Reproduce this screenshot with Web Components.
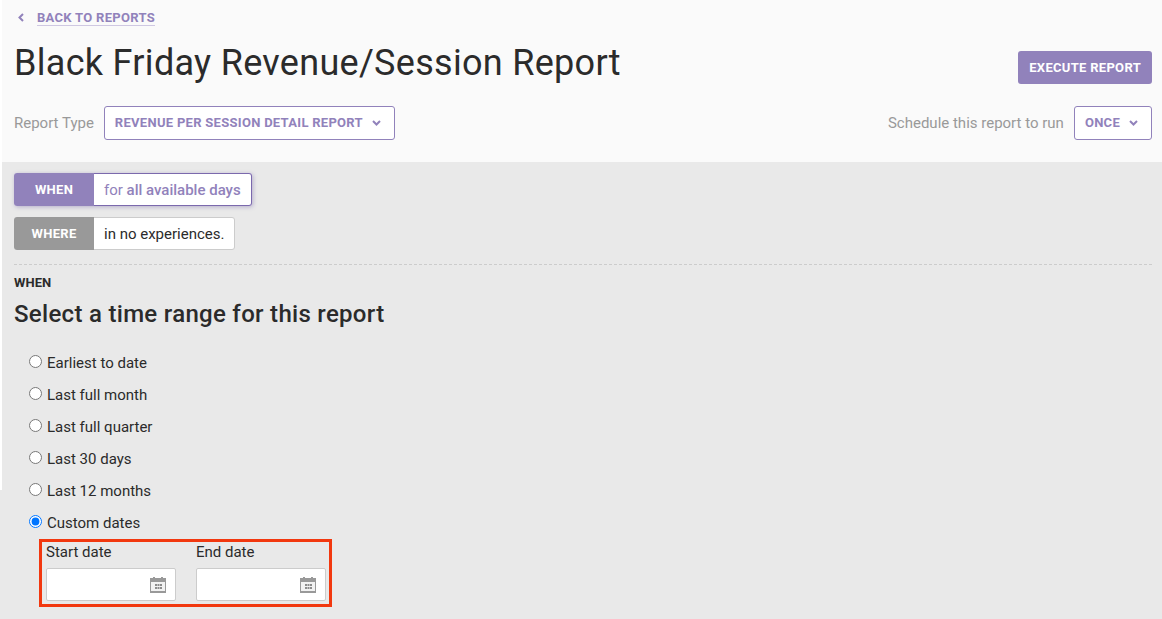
<!DOCTYPE html>
<html>
<head>
<meta charset="utf-8">
<style>
  html, body { margin: 0; height: 100%; background: #fff; overflow: hidden; }
  body { font-family: Roboto, sans-serif; color: #2b2b2b; }
</style>
</head>
<body>
<template id="chev">
  <svg width="9" height="6" viewBox="0 0 9 6" style="display:block"><path d="M1 1l3.5 3.5L8 1" fill="none" stroke="#9182bb" stroke-width="2"/></svg>
</template>

<report-page>
  <report-header slot="header"></report-header>
  <filter-tab label="WHEN" active>for <b>all available days</b></filter-tab>
  <filter-tab label="WHERE">in no experiences.</filter-tab>
  <time-range></time-range>
</report-page>

<script>
class ReportPage extends HTMLElement {
  constructor() {
    super();
    this.attachShadow({ mode: 'open' }).innerHTML = `
      <style>
        :host { display: block; height: 619px; background: linear-gradient(90deg, #fff 2px, transparent 2px) 0 0 / 100% 490px no-repeat, #e9e9e9; }
        .head { height: 162px; margin-left: 2px; background: #fafafa; }
        .body { margin-left: 2px; height: 457px; padding: 11px 10px 0 12px; box-sizing: border-box; display: flex; flex-direction: column; align-items: flex-start; gap: 11px; }
      </style>
      <div class="head"><slot name="header"></slot></div>
      <div class="body"><slot></slot></div>`;
  }
}

class SelectButton extends HTMLElement {
  constructor() {
    super();
    this.attachShadow({ mode: 'open' }).innerHTML = `
      <style>
        :host { display: inline-flex; align-items: center; gap: 9px; height: 34px; box-sizing: border-box; padding: 0 13px 2px 10px; background: #fff; border: 1px solid #9182bb; border-radius: 3px; color: #9182bb; font: 700 13px/1 Roboto, sans-serif; letter-spacing: .29px; }
        svg { position: relative; top: 1px; }
      </style>
      <slot></slot>`;
    this.shadowRoot.append(document.getElementById('chev').content.cloneNode(true));
  }
}

class ReportHeader extends HTMLElement {
  constructor() {
    super();
    this.attachShadow({ mode: 'open' }).innerHTML = `
      <style>
        :host { display: block; padding: 0 10px 0 12px; }
        .back { display: flex; align-items: center; height: 35px; gap: 13px; padding-left: 4px; color: #9182bb; font-size: 13px; font-weight: 700; letter-spacing: .3px; }
        .back span { border-bottom: 1px solid #cfc8e2; line-height: 14px; margin-top: 1px; }
        .title { display: flex; justify-content: space-between; align-items: flex-start; height: 71px; }
        h1 { margin: 0; font-size: 36px; font-weight: 400; line-height: 56px; letter-spacing: .3px; color: #2b2b2b; }
        .exec { margin-top: 16px; height: 33px; padding: 0 11px; background: #9182bb; color: #fff; border: 0; border-radius: 3px; font: 700 13px Roboto, sans-serif; letter-spacing: .3px; }
        .row { display: flex; justify-content: space-between; align-items: center; }
        .group { display: flex; align-items: center; gap: 10px; color: #999; font-size: 15px; }
      </style>
      <div class="back">
        <svg width="6" height="9" viewBox="0 0 6 9"><path d="M5 1L1.5 4.5 5 8" fill="none" stroke="#9182bb" stroke-width="2"/></svg>
        <span>BACK TO REPORTS</span>
      </div>
      <div class="title">
        <h1>Black Friday Revenue/Session Report</h1>
        <button class="exec">EXECUTE REPORT</button>
      </div>
      <div class="row">
        <div class="group">Report Type <select-button>REVENUE PER SESSION DETAIL REPORT</select-button></div>
        <div class="group">Schedule this report to run <select-button>ONCE</select-button></div>
      </div>`;
  }
}

class FilterTab extends HTMLElement {
  constructor() {
    super();
    const active = this.hasAttribute('active');
    this.attachShadow({ mode: 'open' }).innerHTML = `
      <style>
        :host { display: inline-flex; height: 33px; box-sizing: border-box; border-radius: 3px; font-size: 15px; background: #fff; }
        :host([active]) { box-shadow: 1px 1px 4px rgba(86,66,150,.35); }
        ::slotted(b) { font-weight: 500; }
        .label { width: 80px; display: flex; align-items: center; justify-content: center; color: #fff; font-size: 13px; font-weight: 700; letter-spacing: .3px; border-radius: 3px 0 0 3px; background: ${active ? '#9182bb' : '#999'}; }
        .text { display: flex; align-items: center; white-space: pre; padding: 0 10px; border: 1px solid ${active ? '#7b69ad' : '#ccc'}; border-left: 0; border-radius: 0 3px 3px 0; color: ${active ? '#9182bb' : '#2b2b2b'}; }
      </style>
      <div class="label">${this.getAttribute('label')}</div>
      <div class="text"><slot></slot></div>`;
  }
}

class DateField extends HTMLElement {
  constructor() {
    super();
    this.attachShadow({ mode: 'open' }).innerHTML = `
      <style>
        :host { display: flex; flex-direction: column; gap: 7px; font-size: 15px; line-height: 18px; width: 130px; }
        .box { height: 33px; box-sizing: border-box; background: #fff; border: 1px solid #ccc; border-radius: 2px; display: flex; justify-content: flex-end; align-items: center; padding: 1px 9px 0 0; }
      </style>
      <div><slot></slot></div>
      <div class="box">
        <svg width="16" height="16" viewBox="0 0 16 16">
          <path d="M0 1h3V0h2v1h6V0h2v1h3v15H0z" fill="#999"/>
          <rect x="1" y="5" width="14" height="9" fill="#f2f2f2"/>
          <path d="M5 7h2v2H5zM7.5 7h2v2h-2zM10 7h2v2h-2zM5 10h2v2H5zM7.5 10h2v2h-2zM10 10h2v2h-2z" fill="#8c8c8c"/>
        </svg>
      </div>`;
  }
}

class RangeOption extends HTMLElement {
  constructor() {
    super();
    this.attachShadow({ mode: 'open' }).innerHTML = `
      <style>
        :host { display: flex; align-items: center; height: 32px; font-size: 15px; }
        input { margin: 0 5px 0 0; width: 13px; height: 13px; accent-color: #0075ff; position: relative; top: -2px; }
      </style>
      <input type="radio" name="range" ${this.hasAttribute('checked') ? 'checked' : ''}><slot></slot>`;
  }
}

class TimeRange extends HTMLElement {
  constructor() {
    super();
    this.attachShadow({ mode: 'open' }).innerHTML = `
      <style>
        :host { display: block; width: 100%; margin-top: 3px; border-top: 1px dashed #ccc; }
        .eyebrow { margin-top: 11px; font-size: 13px; font-weight: 700; line-height: 13px; letter-spacing: .05px; }
        h2 { margin: 10px 0 18px; font-size: 24px; font-weight: 500; line-height: 30px; letter-spacing: .3px; }
        .options { padding-left: 15px; }
        .dates { display: flex; gap: 20px; width: max-content; margin: 0 0 0 25px; padding: 1px 3px 3px 4px; border: 3px solid #f2380f; }
      </style>
      <div class="eyebrow">WHEN</div>
      <h2>Select a time range for this report</h2>
      <div class="options">
        <range-option>Earliest to date</range-option>
        <range-option>Last full month</range-option>
        <range-option>Last full quarter</range-option>
        <range-option>Last 30 days</range-option>
        <range-option>Last 12 months</range-option>
        <range-option checked>Custom dates</range-option>
      </div>
      <div class="dates">
        <date-field>Start date</date-field>
        <date-field>End date</date-field>
      </div>`;
  }
}

customElements.define('report-page', ReportPage);
customElements.define('select-button', SelectButton);
customElements.define('report-header', ReportHeader);
customElements.define('filter-tab', FilterTab);
customElements.define('date-field', DateField);
customElements.define('range-option', RangeOption);
customElements.define('time-range', TimeRange);
</script>
</body>
</html>
